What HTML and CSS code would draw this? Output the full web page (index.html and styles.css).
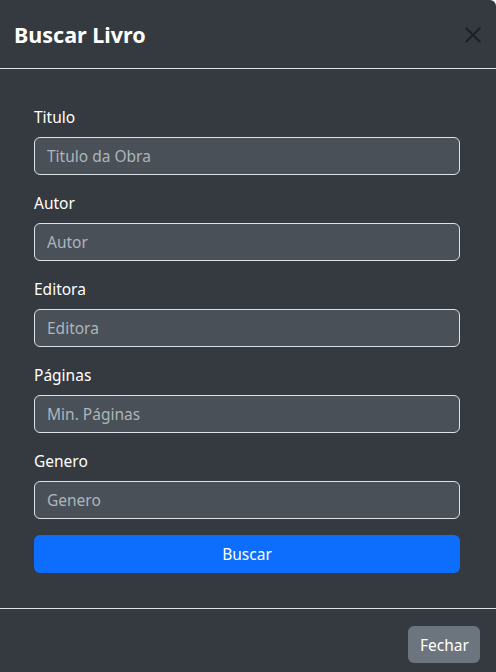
FILE: index.html
```html
<!DOCTYPE html>
<html lang="pt">
<head>
<meta charset="utf-8">
<title>Buscar Livro</title>
<link rel="stylesheet" href="styles.css">
</head>
<body>
<div class="modal">
  <div class="modal-header">
    <h4 class="modal-title">Buscar Livro</h4>
    <button class="btn-close" type="button" aria-label="Close">
      <svg width="16" height="16" viewBox="0 0 16 16"><path d="M1.5 1.5 L14.5 14.5 M14.5 1.5 L1.5 14.5" stroke="#1e2226" stroke-width="2" fill="none"/></svg>
    </button>
  </div>
  <div class="modal-body">
    <form class="form">
      <div class="field">
        <label class="label">Titulo</label>
        <input class="input" type="text" placeholder="Titulo da Obra">
      </div>
      <div class="field">
        <label class="label">Autor</label>
        <input class="input" type="text" placeholder="Autor">
      </div>
      <div class="field">
        <label class="label">Editora</label>
        <input class="input" type="text" placeholder="Editora">
      </div>
      <div class="field">
        <label class="label">Páginas</label>
        <input class="input" type="text" placeholder="Min. Páginas">
      </div>
      <div class="field">
        <label class="label">Genero</label>
        <input class="input" type="text" placeholder="Genero">
      </div>
      <button class="btn btn-primary" type="button">Buscar</button>
    </form>
  </div>
  <div class="modal-footer">
    <button class="btn btn-secondary" type="button">Fechar</button>
  </div>
</div>
</body>
</html>
```

FILE: styles.css
```css
* { box-sizing: border-box; }
html, body { margin: 0; padding: 0; }
body {
  background: #ffffff;
  font-family: "Noto Sans", "Open Sans", sans-serif;
  font-size: 15.5px;
  line-height: 1.5;
  color: #ffffff;
}
.modal {
  background: #343a40;
  width: 496px;
  height: 672px;
  border-top-right-radius: 6px;
  overflow: hidden;
}
.modal-header {
  height: 69px;
  display: flex;
  align-items: center;
  justify-content: space-between;
  padding: 2px 14px 0 14px;
  border-bottom: 1px solid #dee2e6;
}
.modal-title {
  margin: 0;
  font-size: 21.5px;
  font-weight: 700;
  line-height: 30px;
}
.btn-close {
  background: none;
  border: 0;
  padding: 0;
  width: 18px;
  height: 18px;
  display: flex;
  align-items: center;
  justify-content: center;
  cursor: pointer;
}
.btn-close svg { width: 18px; height: 18px; }
.modal-body {
  padding: 36px 36px 35px 34px;
}
.form {
  display: flex;
  flex-direction: column;
}
.field {
  display: flex;
  flex-direction: column;
  margin-bottom: 16px;
}
.label {
  font-size: 15.5px;
  line-height: 24px;
  margin-bottom: 8px;
}
.input {
  height: 38px;
  background: #495057;
  border: 1px solid #dee2e6;
  border-radius: 6px;
  padding: 6px 12px;
  font-family: inherit;
  font-size: 15.5px;
  color: #fff;
}
.input::placeholder { color: #adb5bd; opacity: 1; }
.btn {
  font-family: inherit;
  font-size: 15.5px;
  line-height: 24px;
  border: 0;
  border-radius: 6px;
  color: #fff;
  padding: 7px 12px;
}
.btn-primary {
  background: #0d6efd;
  height: 38px;
}
.modal-footer {
  border-top: 1px solid #dee2e6;
  display: flex;
  justify-content: flex-end;
  padding: 17px 16px 0 16px;
}
.btn-secondary {
  background: #6c757d;
  height: 37px;
  width: 72px;
}
```
